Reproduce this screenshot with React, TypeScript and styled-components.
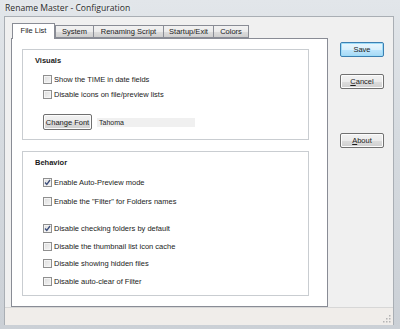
import React from 'react';
import styled, { createGlobalStyle } from 'styled-components';

const Global = createGlobalStyle`
  html, body { margin: 0; padding: 0; background: #c9ced4; }
  * { box-sizing: border-box; }
`;

const Window = styled.div`
  width: 400px;
  height: 329px;
  display: flex;
  flex-direction: column;
  background: linear-gradient(180deg, #e2e6ea 0%, #d6dbe0 40%, #cbd0d6 100%);
  font-family: 'Liberation Sans', Arial, sans-serif;
  color: #1b1b1b;
  overflow: hidden;
`;

const TitleBar = styled.div`
  height: 17px;
  padding-left: 5px;
  display: flex;
  align-items: center;
  font-family: 'Open Sans', 'Liberation Sans', sans-serif;
  font-size: 8.6px;
  color: #2a2a2a;
  text-shadow: 0 0 4px rgba(255, 255, 255, 0.9);
`;

const Frame = styled.div`
  flex: 1;
  margin: 0 6px 4px 4px;
  display: flex;
  flex-direction: column;
  border: 1px solid #a9aeb4;
  border-bottom: none;
`;

const Client = styled.div`
  flex: 1;
  display: flex;
  background: #f0f0f0;
  padding: 6px 0 0 6px;
`;

const TabArea = styled.div`
  width: 317px;
  display: flex;
  flex-direction: column;
`;

const TabRow = styled.div`
  height: 15px;
  display: flex;
  align-items: flex-end;
  padding-left: 1px;
`;

const Tab = styled.div<{ $active?: boolean; $w: number }>`
  width: ${({ $w }) => $w}px;
  height: ${({ $active }) => ($active ? 16 : 13)}px;
  margin-bottom: ${({ $active }) => ($active ? -1 : 0)}px;
  margin-right: ${({ $active }) => ($active ? 0 : -1)}px;
  border: 1px solid #898c95;
  border-bottom: ${({ $active }) => ($active ? 'none' : '1px solid #898c95')};
  background: ${({ $active }) =>
    $active ? '#ffffff' : 'linear-gradient(180deg, #f2f2f2 0%, #ebebeb 50%, #dddddd 51%, #cfcfcf 100%)'};
  font-size: 7.5px;
  display: flex;
  align-items: center;
  justify-content: center;
  padding-bottom: ${({ $active }) => ($active ? 2 : 0)}px;
  position: relative;
  z-index: ${({ $active }) => ($active ? 2 : 1)};
`;

const Panel = styled.div`
  height: 269px;
  background: #ffffff;
  border: 1px solid #898c95;
  padding: 10px 0 0 10px;
  display: flex;
  flex-direction: column;
  gap: 11px;
`;

const Group = styled.div<{ $h: number }>`
  width: 287px;
  height: ${({ $h }) => $h}px;
  border: 1px solid #c9cdd1;
  padding: 6px 0 0 12px;
  display: flex;
  flex-direction: column;
`;

const GroupTitle = styled.div`
  font-weight: bold;
  font-size: 7.5px;
  height: 10px;
  line-height: 10px;
`;

const CheckRow = styled.div<{ $top: number }>`
  display: flex;
  align-items: center;
  gap: 2px;
  margin-top: ${({ $top }) => $top}px;
  padding-left: 8px;
  height: 10px;
  font-size: 7.5px;
`;

const Box = styled.div`
  width: 9px;
  height: 9px;
  border: 1px solid #8f8f8f;
  background: linear-gradient(135deg, #dcdcdc 0%, #f5f5f5 100%);
  box-shadow: inset 0 0 0 1px #f4f4f4;
  display: flex;
  align-items: center;
  justify-content: center;
`;

const FontRow = styled.div`
  display: flex;
  align-items: center;
  gap: 5px;
  margin-top: 15px;
  padding-left: 8px;
`;

const Button = styled.div<{ $default?: boolean; $top?: number }>`
  width: 44px;
  height: 15px;
  margin-top: ${({ $top }) => $top ?? 0}px;
  border: 1px solid ${({ $default }) => ($default ? '#3c7fb1' : '#707070')};
  border-radius: 2px;
  background: ${({ $default }) =>
    $default
      ? 'linear-gradient(180deg, #eaf6fd 0%, #d9f0fc 50%, #bee6fd 51%, #a7d9f5 100%)'
      : 'linear-gradient(180deg, #f2f2f2 0%, #ebebeb 50%, #dddddd 51%, #cfcfcf 100%)'};
  box-shadow: inset 0 0 0 1px ${({ $default }) => ($default ? '#9ddcf8' : '#fcfcfc')};
  font-size: 7.5px;
  display: flex;
  align-items: center;
  justify-content: center;
`;

const FontButton = styled(Button)`
  width: 49px;
  height: 16px;
`;

const FontField = styled.div`
  width: 98px;
  height: 9px;
  background: #f0f0f0;
  font-size: 7px;
  line-height: 9px;
  padding-left: 2px;
`;

const Side = styled.div`
  margin-left: 12px;
  padding-top: 19px;
  display: flex;
  flex-direction: column;
`;

const U = styled.span`
  text-decoration: underline;
`;

const StatusBar = styled.div`
  height: 18px;
  background: #f0edea;
  border-top: 1px solid #d7d7d7;
  display: flex;
  justify-content: flex-end;
  align-items: flex-end;
  padding: 0 2px 2px 0;
`;

const Check = () => (
  <svg width="7" height="7" viewBox="0 0 7 7">
    <path d="M1 3.5 L2.8 5.5 L6 1" fill="none" stroke="#3d4f7c" strokeWidth="1.3" />
  </svg>
);

const Item = ({ label, checked, top }: { label: string; checked?: boolean; top: number }) => (
  <CheckRow $top={top}>
    <Box>{checked && <Check />}</Box>
    <span>{label}</span>
  </CheckRow>
);

const Grip = () => (
  <svg width="8" height="8" viewBox="0 0 8 8">
    {[
      [6, 0],
      [6, 3],
      [3, 3],
      [6, 6],
      [3, 6],
      [0, 6],
    ].map(([x, y]) => (
      <rect key={`${x}-${y}`} x={x} y={y} width="1.5" height="1.5" fill="#b4b4b4" />
    ))}
  </svg>
);

export default function App() {
  return (
    <Window>
      <Global />
      <TitleBar>Rename Master - Configuration</TitleBar>
      <Frame>
        <Client>
          <TabArea>
            <TabRow>
              <Tab $active $w={43}>File List</Tab>
              <Tab $w={39}>System</Tab>
              <Tab $w={71}>Renaming Script</Tab>
              <Tab $w={51}>Startup/Exit</Tab>
              <Tab $w={36}>Colors</Tab>
            </TabRow>
            <Panel>
              <Group $h={91}>
                <GroupTitle>Visuals</GroupTitle>
                <Item top={8} label="Show the TIME in date fields" />
                <Item top={5} label="Disable icons on file/preview lists" />
                <FontRow>
                  <FontButton>Change Font</FontButton>
                  <FontField>Tahoma</FontField>
                </FontRow>
              </Group>
              <Group $h={145}>
                <GroupTitle>Behavior</GroupTitle>
                <Item top={9} checked label="Enable Auto-Preview mode" />
                <Item top={9} label='Enable the "Filter" for Folders names' />
                <Item top={17} checked label="Disable checking folders by default" />
                <Item top={8} label="Disable the thumbnail list icon cache" />
                <Item top={7} label="Disable showing hidden files" />
                <Item top={8} label="Disable auto-clear of Filter" />
              </Group>
            </Panel>
          </TabArea>
          <Side>
            <Button $default>Save</Button>
            <Button $top={17}>
              <U>C</U>ancel
            </Button>
            <Button $top={44}>
              <U>A</U>bout
            </Button>
          </Side>
        </Client>
        <StatusBar>
          <Grip />
        </StatusBar>
      </Frame>
    </Window>
  );
}
